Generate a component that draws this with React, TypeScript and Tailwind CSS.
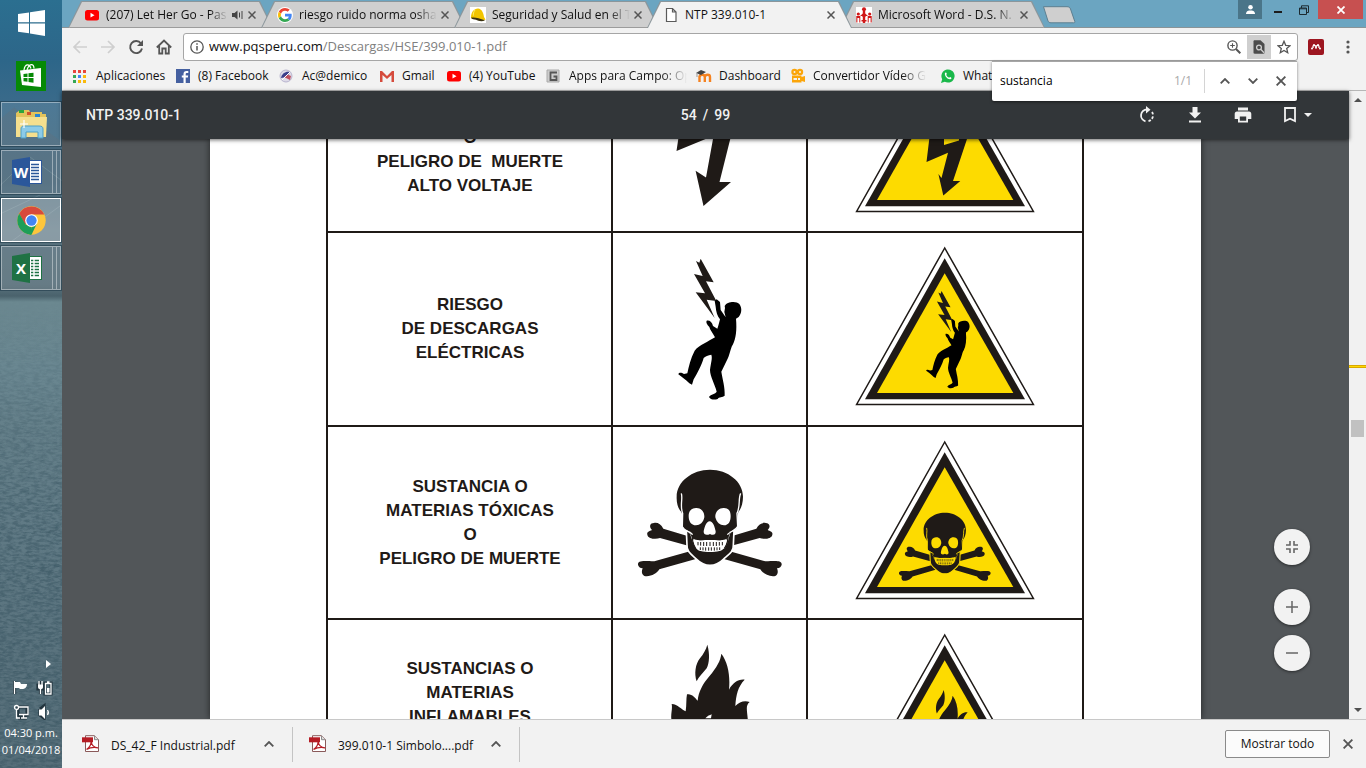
import React from "react";

const INK = "#1f1a17";

/* ---------- warning symbols ---------- */

function StruckMan() {
  return (
    <g>
      <path
        fill={INK}
        d="M272 86 L311 157 L288 154 L319 213 L290 209 L314 264 L257 187 L285 190 L252 132 L278 138 L258 93 L268 98 Z"
      />
      <path
        fill="#000"
        d="M314 212 L320 208 L330 216 L332 240 L345 259 L347 262 L343 246 L345 234 L344 228 C350 214 380 212 388 222 C398 236 394 252 386 261 L378 266 C381 300 378 325 368 345 C362 352 360 375 350 392 L334 425 C338 450 345 470 344 497 C338 503 327 500 323 507 C312 511 300 508 297 501 C303 492 316 493 320 485 C316 465 300 440 300 420 C302 400 308 385 304 374 C295 375 285 379 281 384 C275 405 262 430 251 448 L246 464 L238 460 C228 450 215 440 205 433 C205 428 213 426 222 432 L232 430 C236 410 242 385 254 362 C268 345 295 335 315 322 C308 308 300 300 298 291 C291 284 287 276 290 272 C298 270 307 276 309 288 L322 296 C326 285 328 275 330 268 C322 258 318 245 317 230 Z"
      />
    </g>
  );
}

function HalfBones() {
  return (
    <g fill={INK}>
      <path d="M112 314 C110 305 118 304 126 300 C116 290 120 279 132 279 C143 277 153 283 160 296 L240 320 L240 349 L150 324 C138 329 114 327 112 314 Z" />
      <path d="M84 404 C83 391 98 392 133 394 L240 364 L260 386 L148 418 C142 430 120 442 103 438 C95 434 94 424 98 415 C90 414 85 410 84 404 Z" />
    </g>
  );
}

function Skull() {
  return (
    <g>
      <HalfBones />
      <g transform="translate(599 0) scale(-1 1)">
        <HalfBones />
      </g>
      <path
        fill={INK}
        stroke="#fff"
        strokeWidth="5"
        d="M229 302 L231 345 C229 366 248 376 260 388 C274 402 288 406 300 406 C312 406 326 402 340 388 C352 376 372 366 370 345 L372 302 Z"
      />
      <path fill="#fff" d="M236 303 C244 318 246 336 256 352 C268 368 334 368 346 352 C356 336 356 318 364 303 L350 330 L250 330 Z" />
      <path fill="none" stroke={INK} strokeWidth="4" d="M247 312 C246 330 250 345 258 354 M354 312 C355 330 351 345 343 354" />
      <path
        fill={INK}
        d="M300 119 C354 119 399 155 399 200 C399 222 392 238 385 246 C380 262 384 278 380 294 C372 304 356 302 351 312 C348 324 342 331 330 332 C310 328 290 328 270 332 C258 331 252 324 249 312 C244 302 227 304 220 294 C215 278 222 262 214 246 C206 238 199 222 200 200 C200 155 246 119 300 119 Z"
      />
      <path fill="none" stroke="#fff" strokeWidth="4" d="M214 190 C219 206 209 228 218 250 L217 290 C222 302 240 304 248 314 M392 190 C384 206 392 228 381 250 L383 290 C376 302 360 304 352 314" />
      <path fill="#fff" d="M258 234 C274 233 284 246 283 262 C280 278 270 286 258 286 C243 286 236 274 236 258 C236 243 244 235 258 234 Z M342 234 C326 233 315 246 316 262 C320 278 330 286 342 286 C356 286 362 274 362 258 C362 243 356 235 342 234 Z" />
      <path fill="#fff" d="M299 274 C309 274 314 290 317 304 C318 315 309 317 300 312 C291 317 280 315 281 304 C284 290 289 274 299 274 Z" />
      <path fill="#fff" d="M250 326 C262 335 338 335 350 326 C348 346 340 362 328 363 C312 367 288 367 272 363 C260 362 252 346 250 326 Z" />
      <path fill="none" stroke={INK} strokeWidth="3" d="M264 336 V346 M272 336 V347 M281 336 V348 M290 336 V348 M300 336 V348 M310 336 V348 M319 336 V348 M328 336 V347 M337 336 V346 M271 352 V360 M279 352 V361 M287 352 V362 M296 352 V362 M304 352 V362 M313 352 V362 M321 352 V361 M329 352 V360" />
    </g>
  );
}

function Flame() {
  return (
    <g fill={INK}>
      <path d="M292 107 C300 135 298 162 290 178 C278 194 266 203 260 217 C252 195 256 165 270 148 C280 135 288 122 292 107 Z" />
      <path d="M185 285 C204 286 214 302 227 307 C230 290 228 270 231 256 C245 253 255 266 263 275 C265 250 278 225 298 202 C320 175 332 155 334 134 C354 160 361 200 357 242 C368 222 384 210 404 212 C384 232 378 258 376 291 C388 279 402 274 419 279 C405 290 412 305 414 340 C412 390 370 420 300 420 C230 420 190 390 184 330 C182 315 188 300 185 285 Z" />
      <path fill="#fff" d="M286 328 C293 320 299 319 305 316 L303 328 Z" />
    </g>
  );
}

function Triangle({ label, children }: { label: string; children: React.ReactNode }) {
  return (
    <svg role="img" aria-label={label} viewBox="0 0 180 160" className="mx-auto block h-[160px] w-[180px]">
      <path d="M89.7 2 L1.6 158.4 H178.4 Z" fill="#fff" stroke={INK} strokeWidth="1.5" />
      <path d="M89.7 12.3 L10 153.3 H170 Z" fill={INK} />
      <path d="M89.7 27.3 L22 147 H158.3 Z" fill="#fddb00" />
      {children}
    </svg>
  );
}

function Symbol({ label, box, children }: { label: string; box: string; children: React.ReactNode }) {
  return (
    <svg role="img" aria-label={label} viewBox={box} className="mx-auto block h-[190px] w-[191px]">
      {children}
    </svg>
  );
}

const rows = [
  {
    lines: ["RIESGO ELÉCTRICO", "O", "PELIGRO DE \u00a0MUERTE", "ALTO VOLTAJE"],
    height: "h-[193px]",
    pos: "align-bottom pb-[33px]",
    symbol: (
      <Symbol label="Alto voltaje" box="614 40 191 190">
        <path fill={INK} d="M690 60 L676.5 151 L705.6 139 L713 139 L706 177.5 L695.6 170.7 L703.5 206 L731 182 L719.5 182 L740 100 L715 110 L725 60 Z" />
      </Symbol>
    ),
    small: (
      <g>
        <path fill={INK} d="M78 55 L71.5 109 L93 99.7 L86.5 125 L83.4 121 L88.3 142.5 L105.3 128 L98 128 L112 86 V55 Z" />
        <path fill="#fddb00" d="M89 84 V92 L104 87.5 V82 Z" />
      </g>
    ),
    name: "Alto voltaje",
  },
  {
    lines: ["RIESGO", "DE DESCARGAS", "ELÉCTRICAS"],
    height: "h-[194px]",
    pos: "align-middle",
    symbol: (
      <Symbol label="Descargas eléctricas" box="12 9 573 570">
        <StruckMan />
      </Symbol>
    ),
    small: (
      <g transform="translate(24 25.2) scale(.23)">
        <StruckMan />
      </g>
    ),
    name: "Descargas eléctricas",
  },
  {
    lines: ["SUSTANCIA O", "MATERIAS TÓXICAS", "O", "PELIGRO DE MUERTE"],
    height: "h-[193px]",
    pos: "align-middle",
    symbol: (
      <Symbol label="Materias tóxicas" box="12 -9 573 570">
        <Skull />
      </Symbol>
    ),
    small: (
      <g transform="translate(26.1 47.5) scale(.2127)">
        <g className="[&_[fill='#fff']]:fill-[#fddb00] [&_[stroke='#fff']]:stroke-[#fddb00]">
          <Skull />
        </g>
      </g>
    ),
    name: "Materias tóxicas",
  },
  {
    lines: ["SUSTANCIAS O", "MATERIAS", "INFLAMABLES"],
    height: "h-[193px]",
    pos: "align-top pt-[37px]",
    symbol: (
      <Symbol label="Materias inflamables" box="12 33 573 570">
        <Flame />
      </Symbol>
    ),
    small: (
      <g transform="translate(26.4 34.2) scale(.2133)">
        <Flame />
      </g>
    ),
    name: "Materias inflamables",
  },
];

/* ---------- small icons ---------- */

const Cross = ({ className = "size-2" }: { className?: string }) => (
  <svg viewBox="0 0 8 8" className={className} fill="none" stroke="#555" strokeWidth="1.5">
    <path d="M.5 .5 L7.5 7.5 M7.5 .5 L.5 7.5" />
  </svg>
);

const YouTube = () => (
  <svg viewBox="0 0 16 16" className="size-4 shrink-0">
    <rect x="1" y="3" width="14" height="10.5" rx="2.5" fill="#f00" />
    <path d="M6.5 5.8 L10.5 8.2 L6.5 10.6 Z" fill="#fff" />
  </svg>
);

const Google = () => (
  <svg viewBox="0 0 48 48" className="size-4 shrink-0">
    <circle cx="24" cy="24" r="24" fill="#fff" />
    <g transform="translate(3 3) scale(.875)">
      <path fill="#EA4335" d="M24 9.5c3.54 0 6.71 1.22 9.21 3.6l6.85-6.85C35.9 2.38 30.47 0 24 0 14.62 0 6.51 5.38 2.56 13.22l7.98 6.19C12.43 13.72 17.74 9.5 24 9.5z" />
      <path fill="#4285F4" d="M46.98 24.55c0-1.57-.15-3.09-.38-4.55H24v9.02h12.94c-.58 2.96-2.26 5.48-4.78 7.18l7.73 6c4.51-4.18 7.09-10.36 7.09-17.65z" />
      <path fill="#FBBC05" d="M10.53 28.59c-.48-1.45-.76-2.99-.76-4.59s.27-3.14.76-4.59l-7.98-6.19C.92 16.46 0 20.12 0 24c0 3.88.92 7.54 2.56 10.78l7.97-6.19z" />
      <path fill="#34A853" d="M24 48c6.48 0 11.93-2.13 15.89-5.81l-7.73-6c-2.15 1.45-4.92 2.3-8.16 2.3-6.26 0-11.57-4.22-13.47-9.91l-7.98 6.19C6.51 42.62 14.62 48 24 48z" />
    </g>
  </svg>
);

const Helmet = () => (
  <svg viewBox="0 0 16 16" className="size-4 shrink-0">
    <rect width="16" height="16" fill="#fff" />
    <path d="M1 11 C1 5 4 1.5 8 1.5 C12 2 13.5 6 14 10 L15.5 12.5 C13 14.5 9 13 7 12 C4 11 2 12 1 11 Z" fill="#f2c500" />
    <path d="M1 10.8 C5 10 9 11.5 15 13.2 C12 15 8 13.8 6 12.8 C4 12.2 2 12.5 1 10.8 Z" fill="#3b3210" />
    <path d="M5 3 C3.5 5 3 7 3.5 8.5" stroke="#fff06a" fill="none" />
  </svg>
);

const Page = () => (
  <svg viewBox="0 0 16 16" className="size-4 shrink-0" fill="#fff" stroke="#5a5a5a" strokeWidth="1.2">
    <path d="M3.5 1.5 H9.5 L13 5 V14.5 H3.5 Z M9.5 1.5 V5 H13" />
  </svg>
);

const People = () => (
  <svg viewBox="0 0 16 16" className="size-4 shrink-0">
    <rect width="16" height="16" fill="#fff" />
    <g fill="#d01818">
      <circle cx="8" cy="2.3" r="2" />
      <path d="M6.800 4 H9.200 V16 H6.800 Z" />
      <circle cx="2.300" cy="7" r="1.600" />
      <circle cx="13.700" cy="7" r="1.600" />
      <path d="M.3 15.500 V9 H4.300 V15.500 H3.300 V11 H1.400 V15.500 Z M11.700 15.500 V9 H15.700 V15.500 H14.600 V11 H12.700 V15.500 Z M4 9 L8 5.500 L12 9 H9.500 V10 H6.500 V9 Z M5.500 13 H10.500 V14.500 H5.500 Z" />
    </g>
  </svg>
);

const Pdf = () => (
  <svg viewBox="0 0 18 18" className="size-[18px] shrink-0">
    <path d="M3.5 .7 H12.5 L16.5 4.7 V16.5 H3.5 Z" fill="#fff" stroke="#8a5a5a" />
    <path d="M12.5 .7 V4.7 H16.5" fill="#ddd" stroke="#8a8a8a" />
    <rect x="0" y="2.3" width="11" height="5" fill="#b51c24" />
    <path d="M4.5 14.5 C7 13 9 9.5 9.2 6.5 C9.5 10 12 12.5 16 12.8 C12 12 8 12.5 4.5 14.5 Z" fill="none" stroke="#b51c24" strokeWidth="1.3" />
  </svg>
);

const tabs = [
  { icon: <YouTube />, title: "(207) Let Her Go - Pas", audio: true, active: false },
  { icon: <Google />, title: "riesgo ruido norma osha", audio: false, active: false },
  { icon: <Helmet />, title: "Seguridad y Salud en el T", audio: false, active: false },
  { icon: <Page />, title: "NTP 339.010-1", audio: false, active: true },
  { icon: <People />, title: "Microsoft Word - D.S. N.", audio: false, active: false },
];

function Tab({ tab }: { tab: (typeof tabs)[number] }) {
  const shape = "[clip-path:polygon(0_100%,13px_0,calc(100%-13px)_0,100%_100%)]";
  return (
    <div className={`-mr-3 h-[27px] w-[205px] shrink-0 bg-[#8b969b] px-px pt-px ${shape} ${tab.active ? "relative z-10" : ""}`}>
      <div className={`flex h-full items-center pr-[16px] pl-[15px] ${shape} ${tab.active ? "bg-[#f2f2f2]" : "border-b border-[#9c9c9c] bg-[#cfcfcf]"}`}>
        {tab.icon}
        <a
          href="#tab"
          className={`ml-[6px] min-w-0 flex-1 overflow-hidden text-[12px] whitespace-nowrap text-[#111] ${tab.active ? "" : "[mask-image:linear-gradient(to_right,#000_85%,transparent)]"}`}
        >
          {tab.title}
        </a>
        {tab.audio && (
          <svg viewBox="0 0 12 10" className="ml-1 h-[10px] w-3 shrink-0" fill="#444">
            <path d="M0 3 H2.5 L5.5 .5 V9.5 L2.5 7 H0 Z M7 2.5 H8 V7.5 H7 Z M9.5 1 H10.5 V9 H9.5 Z" />
          </svg>
        )}
        <button aria-label="Cerrar pestaña" className="ml-1 shrink-0">
          <Cross />
        </button>
      </div>
    </div>
  );
}

const bookmarks = [
  {
    label: "Aplicaciones",
    box: "w-[102px]",
    icon: (
      <svg viewBox="0 0 16 16" className="size-4 shrink-0">
        <path fill="#e8453c" d="M0 2h3v3H0zM5 2h3v3H5zM10 2h3v3h-3z" />
        <path fill="#4285f4" d="M5 7h3v3H5z" />
        <path fill="#34a853" d="M0 7h3v3H0zM0 12h3v3H0z" />
        <path fill="#f9b90a" d="M10 7h3v3h-3zM5 12h3v3H5zM10 12h3v3h-3z" />
      </svg>
    ),
  },
  {
    label: "(8) Facebook",
    box: "w-[104px]",
    icon: (
      <svg viewBox="0 0 16 16" className="size-4 shrink-0">
        <rect x="1" y="1" width="14" height="14" fill="#4560a0" />
        <path fill="#fff" d="M8.5 15 V9.5 H6.8 V7.5 H8.5 V6 C8.5 4 9.5 3 11.5 3 H13.3 V5 H12 C11 5 10.7 5.4 10.7 6.2 V7.5 H13.2 L12.9 9.5 H10.7 V15 Z" />
      </svg>
    ),
  },
  {
    label: "Ac@demico",
    box: "w-[100px]",
    icon: (
      <svg viewBox="0 0 16 16" className="size-4 shrink-0">
        <circle cx="7" cy="8" r="6" fill="#dedbe8" stroke="#b9b5cf" />
        <path d="M2 10 C3 5 7 3 11 4 L8 9 Z" fill="#3a3f8c" />
        <path d="M5 9 C7 7 9 6 12 8 L11 12 Z" fill="#c05060" />
        <path d="M3 12 L11 4" stroke="#fff" />
      </svg>
    ),
  },
  {
    label: "Gmail",
    box: "w-[67px]",
    icon: (
      <svg viewBox="0 0 16 16" className="size-4 shrink-0">
        <rect x="1" y="3" width="14" height="11" fill="#f3f3f3" />
        <path fill="#d54b3d" d="M1 3 H3 L8 8 L13 3 H15 V14 H12.5 V7 L8 11 L3.5 7 V14 H1 Z" />
      </svg>
    ),
  },
  { label: "(4) YouTube", box: "w-[100px]", icon: <YouTube /> },
  {
    label: "Apps para Campo: Op",
    box: "w-[150px]",
    fade: true,
    icon: (
      <svg viewBox="0 0 16 16" className="size-4 shrink-0" fill="none">
        <path d="M1 2 H13 V14 H1 Z" fill="#ccc" stroke="#aaa" />
        <path d="M11 4.5 H4.5 V12 H10.5 V8.5 H7.5" stroke="#555" strokeWidth="1.8" />
      </svg>
    ),
  },
  {
    label: "Dashboard",
    box: "w-[94px]",
    icon: (
      <svg viewBox="0 0 16 16" className="size-4 shrink-0" fill="none">
        <path d="M3.5 14 V8 M3.5 9 C4 6 8.5 6 8.8 9 V14 M8.8 9 C9.5 6 14 6 14 9 V14" stroke="#f58220" strokeWidth="2.4" />
        <path d="M0 5 L5 2 L10 4 L5 7 Z" fill="#444" />
        <path d="M1 5 V9" stroke="#999" />
      </svg>
    ),
  },
  {
    label: "Convertidor Vídeo Gr",
    box: "w-[150px]",
    fade: true,
    icon: (
      <svg viewBox="0 0 16 16" className="size-4 shrink-0" fill="#fba50a">
        <circle cx="4.5" cy="4" r="3.2" />
        <circle cx="10" cy="4" r="3.2" />
        <path d="M2 7.5 H11.5 V9 L15 8 V14 L11.5 13 V14.5 H2 Z" />
        <g fill="#f2f2f2">
          <circle cx="4.5" cy="4" r="1" />
          <circle cx="10" cy="4" r="1" />
          <path d="M3.5 10 H7 V12 H3.5 Z M8 10 H10 V12 H8 Z" />
        </g>
      </svg>
    ),
  },
  {
    label: "WhatsApp",
    box: "w-[100px]",
    icon: (
      <svg viewBox="0 0 16 16" className="size-4 shrink-0">
        <path d="M1 15 L2.2 11.2 A6.6 6.6 0 1 1 4.8 13.8 Z" fill="#19b84a" />
        <path d="M5 5 C5.5 4 6.4 4.3 6.7 5.4 C7 6.3 6 6.5 6.4 7.2 C7 8.4 7.8 9 8.9 9.6 C9.6 9.9 9.8 8.8 10.6 9.2 C11.8 9.8 11.8 10.4 10.9 11 C8.5 12.3 4 8 5 5 Z" fill="#fff" />
      </svg>
    ),
  },
];

/* ---------- taskbar ---------- */

const slot = "flex h-[44px] items-center justify-center border border-white/40 outline outline-1 outline-[#1f3a4a]/60";

function StackedSlot({ label, children }: { label: string; children: React.ReactNode }) {
  return (
    <button aria-label={label} className="mx-px flex h-[44px] bg-white/10 outline outline-1 outline-[#1f3a4a]/60">
      <span className="flex h-full w-[52px] items-center justify-center border border-white/40">{children}</span>
      <span className="h-full w-1 border-y border-r border-white/40" />
      <span className="h-full w-1 border-y border-r border-white/40" />
    </button>
  );
}

function OfficeIcon({ color, letter, grid }: { color: string; letter: string; grid: boolean }) {
  return (
    <svg viewBox="0 0 30 30" className="size-[30px]">
      <rect x="16" y="3.5" width="13.5" height="23" fill="#fff" stroke={color} />
      <path d="M19 7.5h8M19 10.5h8M19 13.5h8M19 16.5h8M19 19.5h8M19 22.5h8" stroke={color} strokeWidth="1.3" />
      {grid && <path d="M22 4 V26" stroke="#fff" strokeWidth="1.4" />}
      <path d="M0 3 L18 0 V30 L0 27 Z" fill={color} />
      <text x="9" y="20.5" textAnchor="middle" fontFamily="Open Sans, sans-serif" fontWeight="700" fontSize="15" fill="#fff">
        {letter}
      </text>
    </svg>
  );
}

function Taskbar() {
  return (
    <aside className="relative flex w-[62px] shrink-0 flex-col bg-[linear-gradient(to_bottom,#2b6f90_0px,#2d6689_60px,#396a8a_100px,#41677c_180px,#5a7a88_230px,#58727d_285px,#4a626c_296px,#6b8890_302px,#6a8791_370px,#647f89_430px,#607a85_520px,#5a737e_640px,#566e79_768px)]">
      <svg aria-hidden="true" className="absolute inset-x-0 top-[300px] h-[calc(100%-300px)] w-full [mask-image:linear-gradient(to_bottom,transparent,#000_50%)]">
        <filter id="ground" x="0" y="0" width="100%" height="100%">
          <feTurbulence type="turbulence" baseFrequency="0.035 0.09" numOctaves="4" seed="8" />
          <feColorMatrix values="0 0 0 0 0.04  0 0 0 0 0.09  0 0 0 0 0.12  -5 0 0 0 0.9" />
        </filter>
        <filter id="grain" x="0" y="0" width="100%" height="100%">
          <feTurbulence type="fractalNoise" baseFrequency="0.15 0.4" numOctaves="3" seed="3" />
          <feColorMatrix values="0 0 0 0 0.04  0 0 0 0 0.09  0 0 0 0 0.12  3 0 0 0 -1.1" />
        </filter>
        <rect width="100%" height="100%" filter="url(#ground)" opacity=".6" />
        <rect width="100%" height="100%" filter="url(#grain)" opacity=".5" />
      </svg>
      <svg aria-hidden="true" viewBox="0 0 62 200" preserveAspectRatio="none" className="absolute top-[100px] left-0 h-[190px] w-full">
        <path d="M0 20 L14 8 L30 20 L62 44 V200 H0 Z" fill="#50606c" opacity=".35" />
        <path d="M0 90 L30 60 L62 85 M10 150 L62 110 M0 120 L40 100" stroke="#9db4bf" opacity=".25" fill="none" />
      </svg>
      <div className="relative flex flex-1 flex-col">
        <button aria-label="Inicio" className="mt-[10px] flex h-[27px] justify-center">
          <svg viewBox="0 0 27 26" className="h-[26px] w-[27px]" fill="#fff">
            <path d="M0 4 L11 2.5 V12.3 H0 Z M12 2.3 L27 0 V12.3 H12 Z M0 13.4 H11 V23.3 L0 21.8 Z M12 13.4 H27 V26 L12 23.5 Z" />
          </svg>
        </button>
        <button aria-label="Tienda" className="mt-[24px] flex h-[30px] justify-center">
          <svg viewBox="0 0 30 30" className="size-[30px]">
            <rect width="30" height="30" fill="#068a06" />
            <path d="M4 9.5 L25 7 V26 L6 24 Z" fill="#fff" />
            <path d="M8 9 C9 3 13 2 15 7.5 M11 9 C13 2 18 2 18 7.5" stroke="#fff" strokeWidth="1.2" fill="none" />
            <path d="M7.5 13 L11.5 12.5 V16 H7.5 Z M12.5 12.3 L17.5 11.7 V16 H12.5 Z M7.5 17 H11.5 V20.8 L7.5 20.3 Z M12.5 17 H17.5 V21.8 L12.5 21 Z" fill="#068a06" />
          </svg>
        </button>
        <div className="mt-[11px] flex flex-col gap-1">
          <button aria-label="Explorador" className={`mx-px ${slot} bg-white/10`}>
            <svg viewBox="0 0 32 30" className="h-[30px] w-8">
              <path d="M1 4 L5 1 H14 L15 3 H27 V5 H31 V27 H1 Z" fill="#e3c35c" />
              <path d="M1 8 H32 L31 28 H1 Z" fill="#f5df8e" />
              <path d="M4 1 H9 V4 H4 Z" fill="#2aa63c" />
              <path d="M12 3 H16 V6 H12 Z" fill="#d4502a" />
              <path d="M20 5 H25 V8 H20 Z" fill="#2a86d4" />
              <path d="M6 29 V20 C6 17 8 17 10 17 H24 C27 17 28 18 28 20 V29 H23 V23 H11 V29 Z" fill="#8ccbe8" stroke="#4c9fc6" />
              <path d="M9 11 V19 M5 15 H13" stroke="#fff" strokeWidth="1.2" />
            </svg>
          </button>
          <StackedSlot label="Word">
            <OfficeIcon color="#2b579a" letter="W" grid={false} />
          </StackedSlot>
          <button aria-label="Chrome" className="mx-px flex h-[44px] items-center justify-center border border-white bg-white/30 outline outline-1 outline-[#1f3a4a]/60">
            <svg viewBox="0 0 48 48" className="size-[29px]">
              <circle cx="24" cy="24" r="23.5" fill="#fdc63c" />
              <path d="M24 24 L13 30 L3.6 12.3 A23.5 23.5 0 0 1 44.5 12.8 L45 14 H24 Z" fill="#d84a3c" />
              <path d="M3.6 12.3 L14 30 L24 35 L22.5 47.5 A23.5 23.5 0 0 1 3.6 12.3 Z" fill="#1e9e58" />
              <path d="M24 47.5 L33 29 L24 35 L21 47.4 Z" fill="#1e9e58" />
              <circle cx="24" cy="24" r="10.5" fill="#fff" />
              <circle cx="24" cy="24" r="8.5" fill="#4285f4" />
            </svg>
          </button>
          <StackedSlot label="Excel">
            <OfficeIcon color="#1f7244" letter="X" grid />
          </StackedSlot>
        </div>
        <div className="mt-auto flex flex-col items-end pr-[9px] text-white">
          <button aria-label="Mostrar iconos ocultos" className="mr-[2px] mb-[11px]">
            <svg viewBox="0 0 5 10" className="h-[10px] w-[5px]" fill="#fff">
              <path d="M0 1 L5 5 L0 9 Z" />
            </svg>
          </button>
          <svg viewBox="0 0 40 40" className="mb-1 h-10 w-10" fill="none" stroke="#fff" strokeWidth="1.3">
            <g stroke="#22343e" strokeWidth="3.2">
              <path d="M1.5 1 V14 M27 1 V5 M25 5 H30 V9 H25 Z M27.500 9 V14 M32 3 H38 V14 H32 Z M5 27 H14 V35 H5 Z M5 38 H14 M27 29 V35 L31 38 V26 L27 29" />
            </g>
            <path d="M1.5 1 V14" />
            <path d="M2 2 H7 L8 4 H14 C14 7 12 9 9 9 H7 L6 8 H2 Z" fill="#fff" stroke="none" />
            <path d="M26 1 V5 M29 1 V5 M32.500 3.500 H38 V14 H32.500 Z M34 2 H36.500 M27.500 8 V14" />
            <path d="M25 4.500 H30 V7 C30 8.500 29 9 27.500 9.500 C26 9 25 8.500 25 7 Z" fill="#fff" stroke="none" />
            <path d="M34 8 H36.500 V12.500 H34 Z" fill="#fff" stroke="none" />
            <path d="M6 27 H15 V34.5 H6 M8 38 H14 M10.500 34.500 V38 M3.500 30 V38 H7" />
            <circle cx="3.5" cy="27.5" r="2" />
            <path d="M26 29.500 H28.500 L32 26 V39 L28.500 35.500 H26 Z" fill="#fff" stroke="none" />
            <path d="M34.500 30 C35.500 31.500 35.500 33.500 34.500 35" />
          </svg>
        </div>
        <div className="pb-[10px] text-center text-[11px] leading-[17px] text-white">
          <div>04:30 p.m.</div>
          <div>01/04/2018</div>
        </div>
      </div>
    </aside>
  );
}

/* ---------- browser ---------- */

function TabStrip() {
  return (
    <div className="flex h-7 border-b border-[#8a9498] bg-[#6ba5c1]">
      <div className="flex min-w-0 items-start pt-px pl-[6px]">
        {tabs.map((t) => (
          <Tab key={t.title} tab={t} />
        ))}
        <button aria-label="Nueva pestaña" className="mt-[5px] ml-[9px] shrink-0">
          <svg viewBox="0 0 34 18" className="block h-[18px] w-[34px]">
            <path d="M1.500 .7 H25 C27 .7 28 1.500 28.500 3 L32.800 15.500 C33 16.500 32.500 16.800 31.500 16.800 H9 C7.500 16.800 6.500 16 6 15 Z" fill="#cfcfcf" stroke="#5d7f90" />
          </svg>
        </button>
      </div>
      <div className="ml-auto flex h-[19px] items-stretch pr-[3px]">
        <button aria-label="Perfil" className="flex w-6 items-center justify-center bg-[#4a7589]">
          <svg viewBox="0 0 10 10" className="size-[9px]" fill="#fff">
            <circle cx="5" cy="2.500" r="2.500" />
            <path d="M0 10 C0 6.500 3 6 5 6 C7 6 10 6.500 10 10 Z" />
          </svg>
        </button>
        <button aria-label="Minimizar" className="flex w-[31px] items-center justify-center pt-1">
          <span className="h-[2px] w-2 bg-[#1c1c1c]" />
        </button>
        <button aria-label="Restaurar" className="flex w-[25px] items-center justify-start">
          <svg viewBox="0 0 10 10" className="ml-[6px] size-[10px]" fill="none" stroke="#1c2a30">
            <path d="M.5 3 H7.500 V9.500 H.5 Z M.5 3.800 H7.500 M2.500 3 V.8 H9.500 V7.500 H7.500" />
          </svg>
        </button>
        <button aria-label="Cerrar" className="flex w-[45px] items-center justify-center bg-[#c75050]">
          <svg viewBox="0 0 8 8" className="size-2" fill="none" stroke="#fff" strokeWidth="1.800">
            <path d="M.5 .5 L7.500 7.500 M7.500 .5 L.5 7.500" />
          </svg>
        </button>
      </div>
    </div>
  );
}

function AddressBar() {
  return (
    <div className="flex h-[34px] items-center bg-[#f2f2f2] pt-[4px] pr-4 pl-[10px]">
      <div className="flex w-[111px] shrink-0 items-center gap-3 text-[#555]">
        <button aria-label="Atrás">
          <svg viewBox="0 0 16 16" className="size-4" fill="none" stroke="#cfcfcf" strokeWidth="1.700">
            <path d="M15 8 H2 M8 2 L2 8 L8 14" />
          </svg>
        </button>
        <button aria-label="Adelante">
          <svg viewBox="0 0 16 16" className="size-4" fill="none" stroke="#cfcfcf" strokeWidth="1.700">
            <path d="M1 8 H14 M8 2 L14 8 L8 14" />
          </svg>
        </button>
        <button aria-label="Recargar">
          <svg viewBox="0 0 16 16" className="size-4" fill="none" stroke="#555" strokeWidth="1.900">
            <path d="M13 4.500 A6 6 0 1 0 14 9.500" />
            <path d="M15 1 V7 H9 Z" fill="#555" stroke="none" />
          </svg>
        </button>
        <button aria-label="Página principal">
          <svg viewBox="0 0 16 16" className="size-4" fill="none" stroke="#555" strokeWidth="1.800">
            <path d="M.8 8.500 L8 1.500 L15.200 8.500 M3.200 7 V14.500 H6.300 V9.500 H9.700 V14.500 H12.800 V7" />
          </svg>
        </button>
      </div>
      <div className="flex h-7 min-w-0 flex-1 items-center rounded-[3px] border border-[#a6a6a6] bg-white pl-[6px]">
        <svg viewBox="0 0 14 14" className="size-[14px] shrink-0" fill="none" stroke="#555" strokeWidth="1.300">
          <circle cx="7" cy="7" r="6.200" />
          <path d="M7 6 V10.500 M7 3.300 V4.800" strokeWidth="1.500" />
        </svg>
        <a href="#url" className="ml-[5px] min-w-0 flex-1 overflow-hidden text-[13px] whitespace-nowrap text-[#808080]">
          <span className="text-[#111]">www.pqsperu.com</span>/Descargas/HSE/399.010-1.pdf
        </a>
        <button aria-label="Zoom" className="flex w-[27px] justify-center">
          <svg viewBox="0 0 14 14" className="size-[14px]" fill="none" stroke="#555" strokeWidth="1.400">
            <circle cx="5.500" cy="5.500" r="4.600" />
            <path d="M9 9 L13.300 13.300" strokeWidth="2" />
            <path d="M3.200 5.500 H7.800 M5.500 3.200 V7.800" strokeWidth="1.100" />
          </svg>
        </button>
        <button aria-label="Buscar en la página" className="flex h-6 w-6 items-center justify-center bg-[#cfcfcf]">
          <svg viewBox="0 0 12 14" className="h-[14px] w-3">
            <path d="M.5 1.500 C.5 .7 1 .3 1.700 .3 H7.500 L11.500 4 V12.500 C11.500 13.300 11 13.700 10.300 13.700 H1.700 C1 13.700 .5 13.300 .5 12.500 Z" fill="#4c4c4c" />
            <circle cx="6" cy="7.500" r="2.400" fill="none" stroke="#cfcfcf" strokeWidth="1.300" />
            <path d="M7.800 9.300 L11 12.800" stroke="#cfcfcf" strokeWidth="1.300" />
          </svg>
        </button>
        <button aria-label="Añadir a marcadores" className="flex w-[26px] justify-center">
          <svg viewBox="0 0 14 14" className="size-[14px]" fill="none" stroke="#555" strokeWidth="1.300">
            <path d="M7 1.300 L8.700 5.300 L13 5.700 L9.700 8.500 L10.700 12.700 L7 10.500 L3.300 12.700 L4.300 8.500 L1 5.700 L5.300 5.300 Z" />
          </svg>
        </button>
      </div>
      <button aria-label="Mendeley" className="ml-[10px] shrink-0">
        <svg viewBox="0 0 16 16" className="size-4">
          <rect width="16" height="16" rx="2" fill="#9d1620" />
          <path d="M5 9 V7.500 C5 6 6.500 6 8 7.500 C9.500 6 11 6 11 7.500 V9" fill="none" stroke="#fff" strokeWidth="1.300" />
          <circle cx="6" cy="6" r="1" fill="#fff" />
          <circle cx="10" cy="6" r="1" fill="#fff" />
          <circle cx="8" cy="8.800" r="1" fill="#fff" />
          <circle cx="4" cy="9.600" r="1" fill="#fff" />
          <circle cx="12" cy="9.600" r="1" fill="#fff" />
        </svg>
      </button>
      <button aria-label="Menú" className="ml-[22px] shrink-0">
        <svg viewBox="0 0 4 14" className="h-[14px] w-1" fill="#555">
          <circle cx="2" cy="2" r="1.600" />
          <circle cx="2" cy="7" r="1.600" />
          <circle cx="2" cy="12" r="1.600" />
        </svg>
      </button>
    </div>
  );
}

function Bookmarks() {
  return (
    <nav className="flex h-[29px] items-center overflow-hidden border-b border-[#b6b6b6] bg-[#f2f2f2] pl-[11px] text-[12px] text-[#111]">
      {bookmarks.map((b) => (
        <a key={b.label} href="#marcador" className={`flex shrink-0 items-center gap-[7px] ${b.box}`}>
          {b.icon}
          <span className={`whitespace-nowrap ${b.fade ? "[mask-image:linear-gradient(to_right,#000_75%,transparent_96%)]" : ""}`}>{b.label}</span>
        </a>
      ))}
    </nav>
  );
}

const Chevron = ({ down = false }: { down?: boolean }) => (
  <svg viewBox="0 0 10 6" className="h-[6px] w-[10px]" fill="none" stroke="#555" strokeWidth="1.800">
    <path d={down ? "M.7 .7 L5 5 L9.300 .7" : "M.7 5.300 L5 1 L9.300 5.300"} />
  </svg>
);

function FindBar() {
  return (
    <div className="absolute top-[61px] right-[69px] z-20 flex h-10 w-[305px] items-center rounded-b-[2px] border-t border-[#a6a6a6] bg-white pb-px pl-2 shadow-[0_1px_3px_rgba(0,0,0,.5)]">
      <input aria-label="Buscar" defaultValue="sustancia" className="min-w-0 flex-1 bg-transparent text-[12px] text-black outline-none" />
      <span className="text-[12px] text-[#a9a9a9]">1/1</span>
      <span className="ml-3 h-6 w-px bg-[#d4d4d4]" />
      <button aria-label="Anterior" className="flex w-7 justify-center pl-3">
        <Chevron />
      </button>
      <button aria-label="Siguiente" className="flex w-7 justify-center pl-3">
        <Chevron down />
      </button>
      <button aria-label="Cerrar búsqueda" className="flex w-9 justify-center pr-2 pl-3">
        <Cross className="size-[10px]" />
      </button>
    </div>
  );
}

function PdfToolbar() {
  return (
    <header className="relative z-10 grid h-12 shrink-0 grid-cols-3 items-center bg-[#323639] pr-[37px] pl-6 font-['Roboto',sans-serif] text-[14px] font-medium text-[#f1f1f1] shadow-[0_1px_4px_rgba(0,0,0,.6)]">
      <h1>NTP 339.010-1</h1>
      <div className="flex justify-center gap-[6px] pl-[13px]">
        <span>54</span>
        <span>/</span>
        <span>99</span>
      </div>
      <div className="flex items-center justify-end">
        <button aria-label="Girar" className="flex w-12 justify-center">
          <svg viewBox="0 0 16 18" className="h-[18px] w-4" fill="none" stroke="#f1f1f1" strokeWidth="1.800">
            <path d="M8 3.500 A6 6 0 0 0 6.500 15.300" />
            <path d="M9.500 15.200 A6 6 0 0 0 14 9 M13 6 A6 6 0 0 1 14 9" strokeDasharray="2.600 1.500" />
            <path d="M7 0 L11.500 3.700 L7 7.500 Z" fill="#f1f1f1" stroke="none" />
          </svg>
        </button>
        <button aria-label="Descargar" className="flex w-12 justify-center">
          <svg viewBox="0 0 14 16" className="h-4 w-[14px]" fill="#f1f1f1">
            <path d="M4.500 0 H9.500 V5.500 H13 L7 11.500 L1 5.500 H4.500 Z M1 13.500 H13 V15.500 H1 Z" />
          </svg>
        </button>
        <button aria-label="Imprimir" className="flex w-12 justify-center">
          <svg viewBox="0 0 18 16" className="h-4 w-[18px]" fill="#f1f1f1">
            <path
              fillRule="evenodd"
              d="M4 .5 H14 V3.500 H4 Z M3 4.500 H15 C16.500 4.500 17.300 5.500 17.300 7 V12 H14 V15.500 H4 V12 H.7 V7 C.7 5.500 1.500 4.500 3 4.500 Z M5.800 9.500 V13.700 H12.200 V9.500 Z"
            />
          </svg>
        </button>
        <button aria-label="Marcadores" className="flex w-[45px] items-center justify-end gap-2">
          <svg viewBox="0 0 12 16" className="h-4 w-3" fill="none" stroke="#f1f1f1" strokeWidth="1.800">
            <path d="M1 1 H11 V14 L6 11.800 L1 14 Z" />
          </svg>
          <svg viewBox="0 0 8 4" className="h-1 w-2" fill="#f1f1f1">
            <path d="M0 0 H8 L4 4 Z" />
          </svg>
        </button>
      </div>
    </header>
  );
}

const fab = "flex size-9 items-center justify-center rounded-full bg-[#f2f2f2] shadow-[0_1px_3px_rgba(0,0,0,.5)]";

function Viewer() {
  return (
    <main className="relative min-h-0 flex-1 overflow-hidden bg-[#525659]">
      <article className="mx-auto flow-root h-full w-[991px] bg-white pr-[2px] shadow-[0_0_7px_rgba(0,0,0,.6)]">
        <table className="mx-auto -mt-[101px] w-[758px] table-fixed border-collapse font-['Liberation_Sans',sans-serif] text-[17px] leading-6 font-bold text-[#1f1a17]">
          <colgroup>
            <col className="w-[285px]" />
            <col className="w-[195px]" />
            <col className="w-[276px]" />
          </colgroup>
          <tbody>
            {rows.map((r) => (
              <tr key={r.name} className={r.height}>
                <td className={`border-2 border-[#1f1a17] pl-[2px] text-center ${r.pos}`}>
                  {r.lines.map((l) => (
                    <div key={l}>{l}</div>
                  ))}
                </td>
                <td className="border-2 border-[#1f1a17] align-top">{r.symbol}</td>
                <td className="border-2 border-[#1f1a17] pt-[13px] align-top">
                  <Triangle label={r.name}>{r.small}</Triangle>
                </td>
              </tr>
            ))}
          </tbody>
        </table>
      </article>
      <div className="absolute right-[39px] bottom-12 flex flex-col gap-[10px]">
        <button aria-label="Ajustar a la página" className={`mb-[14px] ${fab}`}>
          <svg viewBox="0 0 12 12" className="size-3" fill="none" stroke="#666" strokeWidth="1.600">
            <path d="M0 4 H4 V0 M8 0 V4 H12 M12 8 H8 V12 M4 12 V8 H0" />
          </svg>
        </button>
        <button aria-label="Acercar" className={fab}>
          <svg viewBox="0 0 12 12" className="size-3" fill="none" stroke="#666" strokeWidth="1.500">
            <path d="M0 6 H12 M6 0 V12" />
          </svg>
        </button>
        <button aria-label="Alejar" className={fab}>
          <svg viewBox="0 0 12 12" className="size-3" fill="none" stroke="#666" strokeWidth="1.500">
            <path d="M0 6 H12" />
          </svg>
        </button>
      </div>
    </main>
  );
}

function ScrollBar() {
  return (
    <div className="flex w-[17px] shrink-0 flex-col items-center bg-[#f1f1f1] py-[7px]">
      <svg viewBox="0 0 8 4" className="h-1 w-2" fill="#505050">
        <path d="M0 4 L4 0 L8 4 Z" />
      </svg>
      <div className="mt-[263px] h-[3px] w-full border-y border-[#d8a800] bg-[#ffd800]" />
      <div className="mt-[52px] h-[17px] w-[13px] bg-[#c1c1c1]" />
      <svg viewBox="0 0 8 4" className="mt-auto h-1 w-2" fill="#505050">
        <path d="M0 0 L4 4 L8 0 Z" />
      </svg>
    </div>
  );
}

function Downloads() {
  return (
    <footer className="flex h-[49px] shrink-0 items-center border-t border-[#c8c8c8] bg-[#f2f2f2] pr-[13px] text-[12px] text-[#111]">
      {["DS_42_F Industrial.pdf", "399.010-1 Simbolo....pdf"].map((name, i) => (
        <div key={name} className={`flex h-[35px] items-center border-r border-[#c4c4c4] ${i === 0 ? "w-[231px] pr-[18px] pl-5" : "w-[227px] pr-[18px] pl-4"}`}>
          <Pdf />
          <a href="#descarga" className="ml-[11px] flex-1 pt-1 whitespace-nowrap">
            {name}
          </a>
          <button aria-label="Opciones">
            <Chevron />
          </button>
        </div>
      ))}
      <button className="ml-auto h-7 w-[105px] rounded-[2px] border border-[#8a8a8a] bg-[#fbfbfb]">Mostrar todo</button>
      <button aria-label="Cerrar barra de descargas" className="ml-[13px]">
        <Cross className="size-[10px]" />
      </button>
    </footer>
  );
}

export default function App() {
  return (
    <div className="flex h-screen overflow-hidden font-['Open_Sans','Noto_Sans',sans-serif]">
      <Taskbar />
      <div className="relative flex min-w-0 flex-1 flex-col">
        <TabStrip />
        <AddressBar />
        <Bookmarks />
        <FindBar />
        <div className="flex min-h-0 flex-1">
          <div className="flex min-w-0 flex-1 flex-col">
            <PdfToolbar />
            <Viewer />
          </div>
          <ScrollBar />
        </div>
        <Downloads />
      </div>
    </div>
  );
}
